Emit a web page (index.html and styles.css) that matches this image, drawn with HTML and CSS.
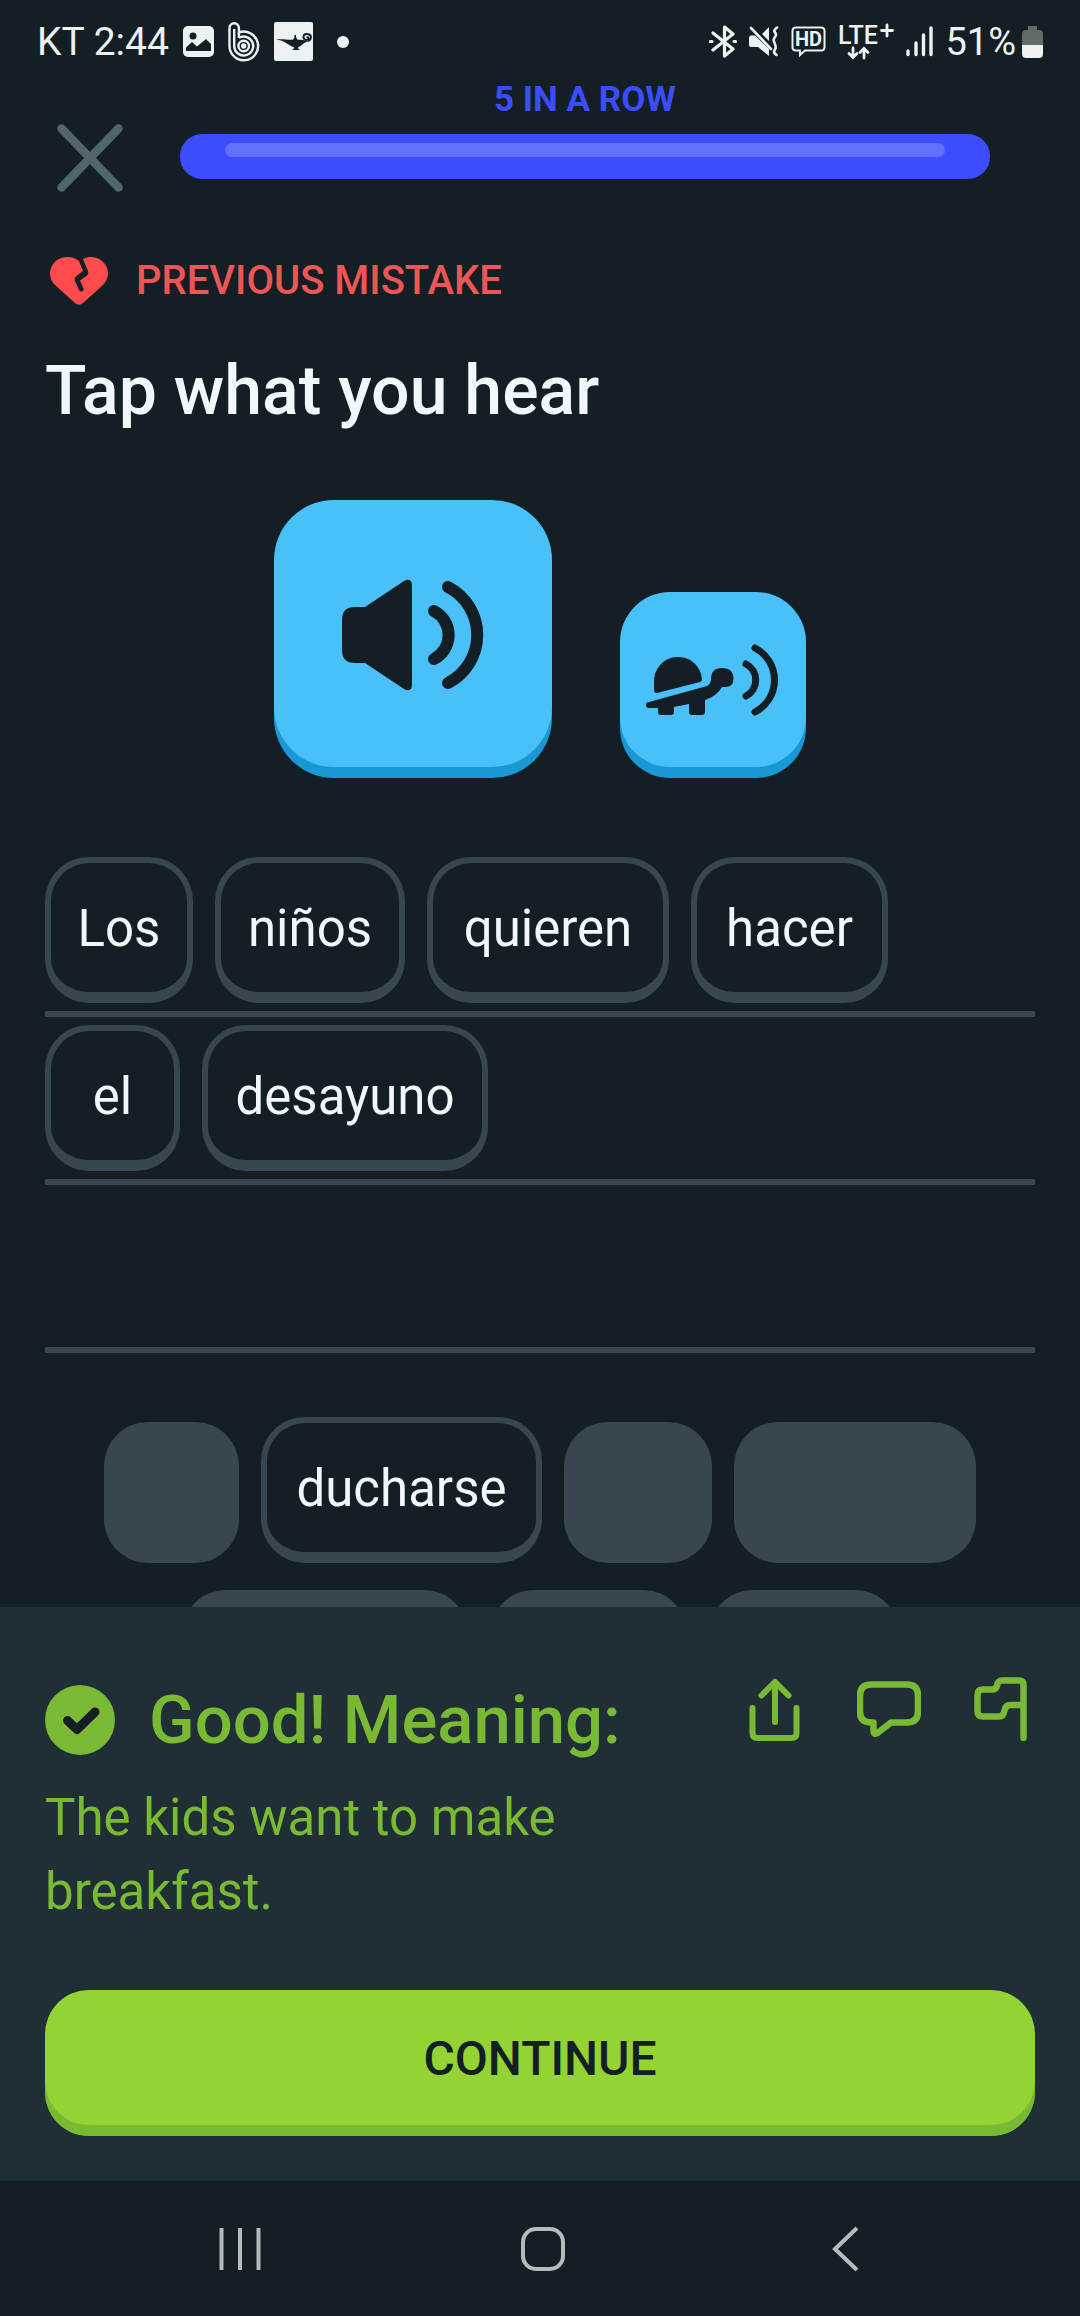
FILE: index.html
```html
<!DOCTYPE html>
<html lang="en">
<head>
<meta charset="utf-8">
<meta name="viewport" content="width=device-width, initial-scale=1">
<title>Tap what you hear</title>
<link rel="stylesheet" href="styles.css">
</head>
<body>
<div class="app">
  <div class="status">
    <div class="status-group status-left">
      <span>KT 2:44</span>
      <svg width="31" height="31" viewBox="0 0 31 31"><rect width="31" height="31" rx="5" fill="currentColor"/><circle cx="10" cy="10" r="3.500" class="ink"/><path d="M3 21.500 9 16l5 4.500L23 13l5 5v7H3z" class="ink"/></svg>
      <svg width="32" height="40" viewBox="0 0 32 40" fill="none" stroke="currentColor" stroke-width="2.400"><path d="M1.500 24V6a4.700 4.700 0 0 1 9.400 0v4.500A14.300 14.300 0 1 1 1.500 24z"/><path d="M6.200 24V7M10.900 11v5"/><path d="M10.900 15.800a9.500 9.500 0 1 1-4.700 8.200"/><circle cx="15.700" cy="24" r="5.300"/><circle cx="15.700" cy="24" r="1.500" fill="currentColor"/></svg>
      <svg width="39" height="39" viewBox="0 0 39 39"><rect width="39" height="39" rx="2" fill="currentColor"/><path d="M2 17.500c6-1 11 .5 17 .2l1.500-2.500v-2.200h1.500v2.200l1.500 2.500c4 0 7 0 11 1.500-5 1-7 5-10.500 6v1.300l2 1.500h-8l2-1.500v-1.300C14 23.500 11 18 2 17.500z" class="ink"/><path d="M34 19c4-2 4-7-1-7a3 3 0 1 0 1 5.500c1-1 0-3-1.500-2" fill="none" class="ink-line"/></svg>
      <svg width="32" height="12" viewBox="0 0 32 12"><circle cx="16" cy="6" r="6" fill="currentColor"/></svg>
    </div>
    <div class="status-group">
      <svg width="28" height="33" viewBox="0 0 28 33" fill="none" stroke="currentColor" stroke-width="3.200" stroke-linejoin="round" stroke-linecap="round"><path d="M4 8l20 16-8.500 7V2L24 9 4 25"/><path d="M1.500 16.500h1.500M25 16.500h1.500"/></svg>
      <svg width="30" height="31" viewBox="0 0 30 31"><path d="M13 8 20 1v14zM2 9.500h4L20 23v7L9 21H2q-2 0-2-2v-7q0-2.500 2-2.500z" fill="currentColor"/><path d="M2 2l20 21M28 1.500q-4 3-2 5t0 4.500-1 4.500 1.500 4.500-1 4.500 2 4.500" fill="none" stroke="currentColor" stroke-width="2.600" stroke-linecap="round"/></svg>
      <svg width="35" height="31" viewBox="0 0 35 31"><path d="M5 1.500h25q3.500 0 3.500 3.500v16q0 3.500-3.500 3.500H14l-5 4.500v-4.500H5q-3.500 0-3.500-3.500V5q0-3.500 3.500-3.500z" fill="none" stroke="currentColor" stroke-width="2"/><text x="17.500" y="20" text-anchor="middle" class="hd">HD</text></svg>
      <svg width="56" height="48" viewBox="0 -6 56 48"><text x="0" y="20" class="lte">LTE</text><path d="M49 1v11M43.500 6.500h11M15 24v9M11 29.500l4 4 4-4M26 34V25M22 28.500l4-4 4 4" fill="none" stroke="currentColor" stroke-width="2.800" stroke-linecap="round"/></svg>
      <svg width="27" height="31" viewBox="0 0 27 31" stroke="currentColor" stroke-width="3.400" stroke-linecap="round"><path d="M2 25v3.500M10 17v11.500M17.500 9v19.500M25 2v26.500"/></svg>
      <div class="battery">
        <span>51%</span>
        <svg width="21" height="32" viewBox="0 0 21 32"><path d="M6 0h9v4h2q4 0 4 4v11H0V8q0-4 4-4h2z" fill="#636a6c"/><path d="M0 19h21v9q0 4-4 4H4q-4 0-4-4z" fill="currentColor"/></svg>
      </div>
    </div>
  </div>

  <main class="lesson">
    <header class="top">
      <button class="close" type="button" aria-label="Close"><svg width="66" height="68" viewBox="0 0 66 68"><path d="M4.500 4.500l57 59M61.500 4.500l-57 59" fill="none" stroke="#52656d" stroke-width="8.500" stroke-linecap="round"/></svg></button>
      <div class="streak">
        <span class="streak-label">5 IN A ROW</span>
        <div class="bar"><div class="bar-shine"></div></div>
      </div>
    </header>

    <p class="mistake">
      <svg width="58" height="48" viewBox="0 0 58 48"><path d="M29 4C22-2 10-1 4 6c-6 7-5 16 1 22l20 18q4 3.500 8 0l20-18c6-6 7-15 1-22-5-6-14-8-21-4l5 12q1 3-1 4.500l-7 5 3.500 8q.500 2.500-1.500 3-2 .500-3-1.500l-4-9q-1-3 1-4.500l7-5.500z" fill="#ff4b4b"/></svg>
      PREVIOUS MISTAKE
    </p>
    <h1 class="title">Tap what you hear</h1>

    <div class="audio">
      <button class="play play-main" type="button" aria-label="Play">
        <svg viewBox="0 0 278 267"><path d="M81 107h10l39-26q8-4 8 5v98q0 9-8 5l-39-26H81q-13 0-13-13v-30q0-13 13-13z" class="ink"/><path d="M160 111a27 27 0 0 1 0 48" class="wave wave-lg"/><path d="M174 87a54 54 0 0 1 0 96" class="wave wave-lg"/></svg>
      </button>
      <button class="play play-slow" type="button" aria-label="Play slowly">
        <svg viewBox="0 0 186 175"><path d="M34 98v-7a24 24 0 0 1 48-4q.500 2-2 3l-43 11q-3 0-3-3z" class="ink"/><path d="M29 110l58-16q4-2 4-7 0-11 11-11 11.500 0 11.500 11 0 8-8.500 8h-3q-5 9-17 13v12q0 3-3 3H72q-3 0-3-3v-8l-15 3v5q0 3-3 3H41q-3 0-3-3v-4h-9q-3 0-3-3t3-3z" class="ink"/><path d="M126 72a18 18 0 0 1 0 32" class="wave"/><path d="M135 56a36 36 0 0 1 0 64" class="wave"/></svg>
      </button>
    </div>

    <div class="answer">
      <div class="line">
        <button class="chip w-los" type="button">Los</button>
        <button class="chip w-ninos" type="button">niños</button>
        <button class="chip w-quieren" type="button">quieren</button>
        <button class="chip w-hacer" type="button">hacer</button>
      </div>
      <div class="line">
        <button class="chip w-el" type="button">el</button>
        <button class="chip w-desayuno" type="button">desayuno</button>
      </div>
      <div class="line"></div>
    </div>

    <div class="bank">
      <span class="slot w-el"></span>
      <button class="chip w-ducharse" type="button">ducharse</button>
      <span class="slot w-los"></span>
      <span class="slot w-quieren"></span>
      <span class="slot w-desayuno"></span>
      <span class="slot w-hacer"></span>
      <span class="slot w-ninos"></span>
    </div>
  </main>

  <section class="result">
    <div class="result-body">
      <div class="result-text">
        <h2 class="verdict">
          <svg width="70" height="70" viewBox="0 0 70 70"><circle cx="35" cy="35" r="35" fill="#79b933"/><path d="M22.500 35.500 32 44.500 50 27" fill="none" stroke="#131f24" stroke-width="9" stroke-linecap="round" stroke-linejoin="round"/></svg>
          Good! Meaning:
        </h2>
        <p class="meaning">The kids want to make breakfast.</p>
      </div>
      <div class="actions">
        <button type="button" aria-label="Share"><svg viewBox="0 0 64 64"><path d="M9.500 31v25q0 5 5 5h34q5 0 5-5V31M32 45V5M18.500 18.500 32 5l13.500 13.500" stroke-width="6"/></svg></button>
        <button type="button" aria-label="Discuss"><svg viewBox="0 0 64 64"><path d="M14 7.500h36q11 0 11 11v16q0 11-11 11H34L20.500 56q-4 2-4-2v-8.500H14q-11 0-11-11v-16q0-11 11-11z" stroke-width="6.500"/></svg></button>
        <button type="button" aria-label="Report"><svg viewBox="0 0 64 64"><path d="M52.500 61V8q0-4.500-4.500-4.500H31q-4 0-5 5-.800 4-5 4h-9q-5.500 0-5.500 5.500v16q0 5.500 5.500 5.500h16q4.500 0 5.500-6 1-5.500 5.500-5.500h13.500" stroke-width="6.500"/></svg></button>
      </div>
    </div>
    <button class="continue" type="button">CONTINUE</button>
  </section>

  <nav class="system">
    <button type="button" aria-label="Recent apps"><svg width="46" height="46" viewBox="0 0 46 46"><path d="M4.500 2v42M23 2v42M41.500 2v42"/></svg></button>
    <button type="button" aria-label="Home"><svg width="46" height="46" viewBox="0 0 46 46"><rect x="3" y="3" width="40" height="40" rx="13"/></svg></button>
    <button type="button" aria-label="Back"><svg width="46" height="46" viewBox="0 0 46 46"><path d="M35 2 13 23l22 21"/></svg></button>
  </nav>
</div>
</body>
</html>
```
FILE: styles.css
```css
* {
  box-sizing: border-box;
}

body {
  margin: 0;
  background: #131f24;
  color: #f1f7fb;
  font-family: Roboto, "Liberation Sans", sans-serif;
}

h1,
h2,
p {
  margin: 0;
}

button {
  padding: 0;
  border: 0;
  background: none;
  color: inherit;
  font: inherit;
  cursor: pointer;
}

svg {
  display: block;
  flex: none;
}

.ink {
  fill: #131f24;
}

.ink-line {
  stroke: #131f24;
  stroke-width: 2;
}

.app {
  display: flex;
  flex-direction: column;
  height: 100vh;
}

/* Phone status bar */

.status {
  display: flex;
  justify-content: space-between;
  align-items: center;
  flex: none;
  height: 78px;
  padding: 5px 37px 0;
  color: #eef1f1;
  font-size: 39px;
}

.status-group {
  display: flex;
  align-items: center;
  gap: 12px;
}

.status-left {
  gap: 14px;
}

.battery {
  display: flex;
  align-items: center;
  gap: 6px;
  font-size: 38px;
}

.hd {
  fill: currentColor;
  font-size: 20px;
  font-weight: 700;
}

.lte {
  fill: currentColor;
  font-size: 25px;
  font-weight: 500;
}

/* Exercise */

.lesson {
  flex: 1 1 0;
  min-height: 0;
  padding: 0 45px;
  overflow: hidden;
}

.top {
  display: flex;
  align-items: flex-start;
  gap: 45px;
  padding-right: 45px;
}

.close {
  display: grid;
  place-items: center;
  flex: none;
  width: 90px;
  height: 90px;
  margin-top: 35px;
}

.streak {
  flex: 1;
}

.streak-label {
  display: block;
  margin-bottom: 12px;
  color: #3c4dff;
  font-size: 35px;
  font-weight: 700;
  line-height: 44px;
  text-align: center;
}

.bar {
  height: 45px;
  padding: 9px 45px;
  border-radius: 22px;
  background: #3c4dff;
}

.bar-shine {
  height: 14px;
  border-radius: 7px;
  background: #6371ff;
}

.mistake {
  display: flex;
  align-items: center;
  gap: 28px;
  margin-top: 53px;
  padding-left: 5px;
  color: #ee5555;
  font-size: 40px;
  font-weight: 500;
  line-height: 50px;
}

.title {
  margin-top: 45px;
  font-size: 68px;
  font-weight: 500;
  line-height: 80px;
}

.audio {
  display: flex;
  justify-content: center;
  align-items: flex-end;
  gap: 68px;
  margin-top: 69px;
}

.play {
  background: #49c0f8;
  box-shadow: 0 11px #1899d6;
  margin-bottom: 11px;
}

.play svg {
  width: 100%;
}

.play-main {
  width: 278px;
  height: 267px;
  border-radius: 60px;
}

.play-slow {
  width: 186px;
  height: 175px;
  border-radius: 50px;
}

.wave {
  fill: none;
  stroke: #131f24;
  stroke-width: 7;
  stroke-linecap: round;
}

.wave-lg {
  stroke-width: 12;
}

.answer {
  display: grid;
  gap: 8px;
  margin-top: 79px;
}

.line {
  display: flex;
  gap: 22px;
  height: 160px;
  border-bottom: 6px solid #37464f;
}

.chip {
  height: 146px;
  padding-top: 3px;
  border: 6px solid #37464f;
  border-bottom-width: 11px;
  border-radius: 44px;
  font-size: 51px;
  line-height: 60px;
  text-align: center;
}

.bank {
  display: flex;
  flex-wrap: wrap;
  justify-content: center;
  gap: 22px;
  margin-top: 64px;
}

.slot {
  height: 141px;
  margin-top: 5px;
  border-radius: 44px;
  background: #37464f;
}

/* A word keeps its width in the answer and in the bank */

.w-el {
  width: 135px;
}

.w-los {
  width: 148px;
}

.w-ninos {
  width: 190px;
}

.w-hacer {
  width: 197px;
}

.w-quieren {
  width: 242px;
}

.w-ducharse {
  width: 281px;
}

.w-desayuno {
  width: 286px;
}

/* Result sheet */

.result {
  flex: none;
  padding: 70px 45px 45px;
  background: #202f36;
  color: #79b933;
}

.result-body {
  display: flex;
  align-items: flex-start;
}

.result-text {
  flex: 1;
}

.verdict {
  display: flex;
  align-items: center;
  gap: 34px;
  font-size: 67px;
  font-weight: 500;
  line-height: 86px;
}

.meaning {
  margin-top: 18px;
  font-size: 51px;
  line-height: 74px;
}

.actions {
  display: flex;
  gap: 50px;
}

.actions svg {
  width: 64px;
  height: 64px;
  fill: none;
  stroke: currentColor;
  stroke-linecap: round;
  stroke-linejoin: round;
}

.continue {
  display: block;
  width: 100%;
  height: 146px;
  margin-top: 61px;
  padding-bottom: 10px;
  border-radius: 44px;
  background: #93d334;
  box-shadow: inset 0 -11px #79b933;
  color: #131f24;
  font-size: 48px;
  font-weight: 500;
}

/* Phone navigation */

.system {
  display: flex;
  justify-content: space-between;
  align-items: center;
  flex: none;
  height: 135px;
  padding: 0 212px 0 217px;
}

.system svg {
  fill: none;
  stroke: #b6bbbd;
  stroke-width: 4;
}
```
